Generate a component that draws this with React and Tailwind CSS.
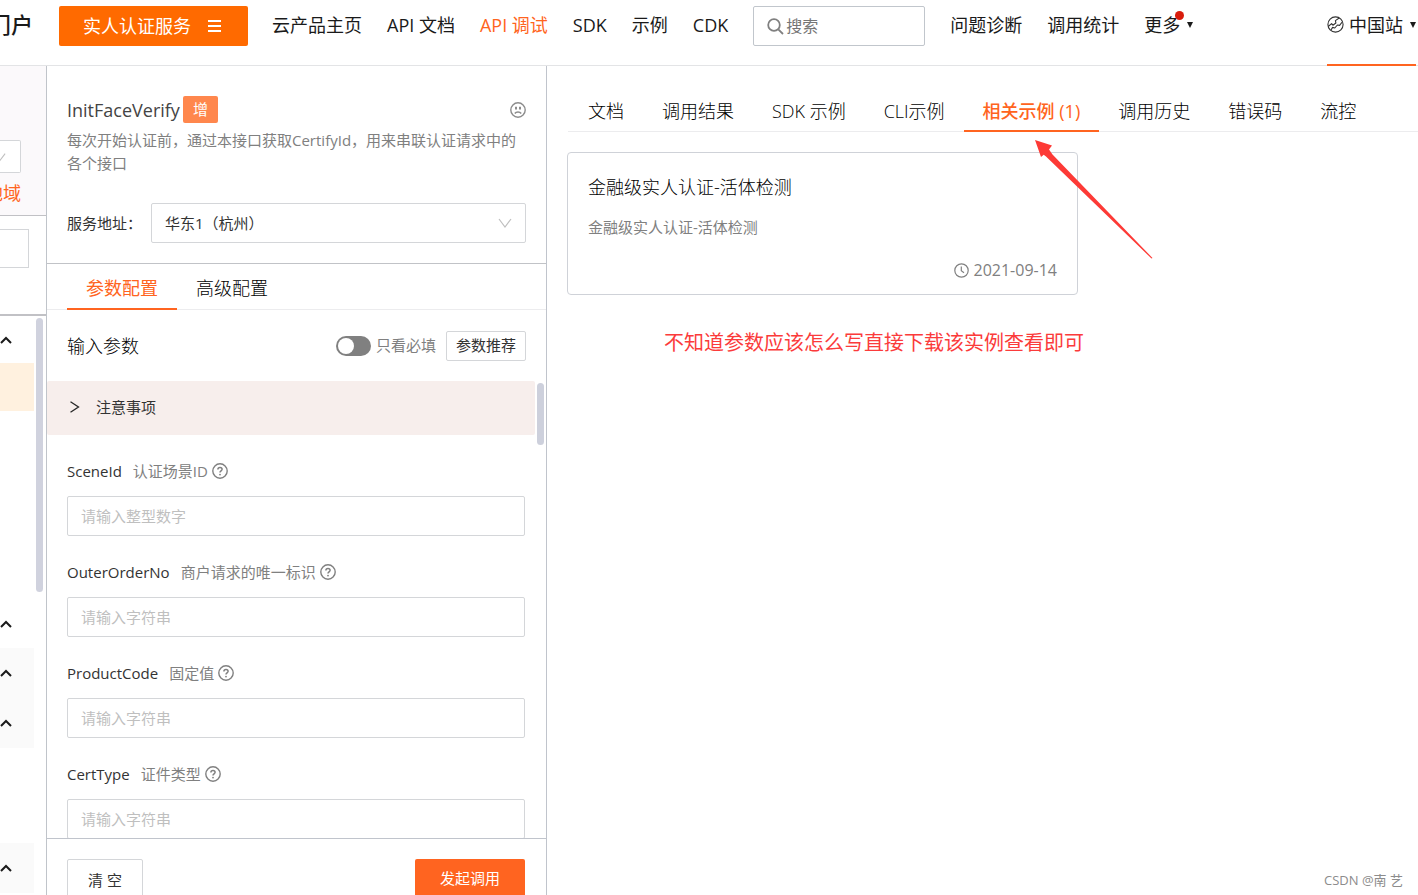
import React from "react";

const navLinks = [
  { label: "云产品主页" },
  { label: "API 文档" },
  { label: "API 调试", active: true },
  { label: "SDK" },
  { label: "示例" },
  { label: "CDK" },
];

const resultTabs = [
  { label: "文档" },
  { label: "调用结果" },
  { label: "SDK 示例" },
  { label: "CLI示例" },
  { label: "相关示例 (1)", active: true },
  { label: "调用历史" },
  { label: "错误码" },
  { label: "流控" },
];

const fields = [
  { name: "SceneId", hint: "认证场景ID", placeholder: "请输入整型数字" },
  { name: "OuterOrderNo", hint: "商户请求的唯一标识", placeholder: "请输入字符串" },
  { name: "ProductCode", hint: "固定值", placeholder: "请输入字符串" },
  { name: "CertType", hint: "证件类型", placeholder: "请输入字符串" },
];

function ChevronDown({ className }) {
  return (
    <svg viewBox="0 0 14 10" fill="none" stroke="#bfbfbf" strokeWidth="1.2" className={className} aria-hidden="true">
      <path d="M1 1l6 8 6-8" />
    </svg>
  );
}

function ChevronUp() {
  return (
    <svg width="12" height="8" viewBox="0 0 12 8" fill="none" stroke="#1a1a1a" strokeWidth="2" aria-hidden="true">
      <path d="M1 7l5-5 5 5" />
    </svg>
  );
}

function HelpIcon() {
  return (
    <svg width="16" height="16" viewBox="0 0 16 16" fill="none" stroke="#808080" aria-hidden="true">
      <circle cx="8" cy="8" r="7.2" strokeWidth="1.4" />
      <path d="M5.9 6.5C5.9 5.2 6.8 4.4 8 4.4s2.1.8 2.1 1.9c0 1.5-2.1 1.6-2.1 3.2" strokeWidth="1.5" />
      <circle cx="8" cy="11.6" r="0.9" fill="#808080" stroke="none" />
    </svg>
  );
}

function SadIcon() {
  return (
    <svg width="16" height="16" viewBox="0 0 16 16" fill="none" stroke="#8c8c8c" aria-hidden="true">
      <circle cx="8" cy="8" r="7.2" strokeWidth="1.4" />
      <path d="M6 4.8v2.8M10 4.8v2.8" strokeWidth="2" />
      <path d="M4.8 11.5c.8-1.2 1.900-1.600 3.200-1.600s2.400.4 3.200 1.600" strokeWidth="1.5" />
    </svg>
  );
}

function GlobeIcon() {
  return (
    <svg width="17" height="17" viewBox="0 0 17 17" fill="none" stroke="#333" strokeWidth="1.1" strokeLinejoin="round" aria-hidden="true">
      <circle cx="8.5" cy="8.5" r="7.6" />
      <path d="M1.200 10.500L4.600 7.600l1.300 1.600 3-2.200-.5-2.400L12.200 2" />
      <path d="M4 14l1.600-2.600 2.200.6 2.600-3 2.200.4 2.600-3.400" />
    </svg>
  );
}

function Caret() {
  return (
    <svg width="6" height="6" viewBox="0 0 6 6" fill="#1a1a1a" aria-hidden="true">
      <path d="M0 0h6L3 6z" />
    </svg>
  );
}

function Header() {
  return (
    <header className="flex h-[66px] shrink-0 items-start border-b border-[#e3e4e6] pt-1.5 text-lg text-[#1a1a1a]">
      <div className="flex h-9 w-[59px] shrink-0 items-center justify-end overflow-hidden pr-[26px] text-[22px] whitespace-nowrap">
        <span className="shrink-0 font-medium">门户</span>
      </div>
      <button type="button" className="flex h-10 w-[189px] shrink-0 items-center justify-between rounded-xs bg-[#ff6a00] pr-[27px] pl-6 text-white">
        实人认证服务
        <svg width="13" height="12" viewBox="0 0 13 12" fill="none" stroke="#fff" strokeWidth="2" aria-hidden="true">
          <path d="M0 1h13M0 6h13M0 11h13" />
        </svg>
      </button>
      <nav className="ml-6 flex h-10 items-center gap-[25px] whitespace-nowrap">
        {navLinks.map((link) => (
          <a key={link.label} href="#" className={link.active ? "pb-0.5 text-[#ff6420]" : "pb-0.5"}>
            {link.label}
          </a>
        ))}
        <label className="flex h-10 w-[172px] items-center rounded-xs border border-[#c1c6cc] pl-[13px]">
          <svg width="17" height="17" viewBox="0 0 17 17" fill="none" stroke="#808080" strokeWidth="1.8" className="shrink-0" aria-hidden="true">
            <circle cx="7" cy="7" r="5.8" />
            <path d="M11.3 11.3l4.700 4.700" />
          </svg>
          <input type="search" placeholder="搜索" aria-label="搜索" className="ml-0.5 w-full min-w-0 bg-transparent text-base outline-none placeholder:text-[#757575]" />
        </label>
        <a href="#" className="pb-0.5">问题诊断</a>
        <a href="#" className="pb-0.5">调用统计</a>
        <button type="button" className="relative flex items-center gap-[7px] pb-0.5">
          更多
          <Caret />
          <span className="absolute top-0 left-[31px] size-[9px] rounded-full bg-[#d91c0b]" />
        </button>
      </nav>
      <button type="button" className="mr-0.5 ml-auto flex h-[60px] items-start gap-[5px] border-b-2 border-[#ff6420] whitespace-nowrap">
        <span className="flex h-9 items-center"><GlobeIcon /></span>
        <span className="flex h-[38px] items-center gap-[7px]">中国站 <Caret /></span>
      </button>
    </header>
  );
}

function SideRow({ shaded }) {
  return (
    <button type="button" aria-label="展开" className={"flex h-[50px] w-[34px] shrink-0 items-center " + (shaded ? "bg-[#fafafa]" : "")}>
      <ChevronUp />
    </button>
  );
}

function Sidebar() {
  return (
    <aside className="flex w-[47px] shrink-0 flex-col overflow-hidden border-r border-[#c0c4ca]">
      <div className="flex h-[150px] shrink-0 flex-col border-b border-[#c1c1c5] bg-[#fbf9fb] pt-[74px]">
        <div className="flex h-[33px] w-[21px] items-center rounded-r-xs border-y border-r border-[#d4d6d9] bg-white">
          <ChevronDown className="-ml-1.5 h-2.5 w-3 shrink-0" />
        </div>
        <div className="mt-[7px] flex w-[21px] justify-end overflow-hidden text-lg leading-[26px] whitespace-nowrap text-[#ff6420]">
          <span className="shrink-0">地域</span>
        </div>
      </div>
      <div className="h-[100px] shrink-0 border-b-2 border-[#c1c1c5] pt-[13px]">
        <input type="text" aria-label="筛选" className="block h-[39px] w-[29px] border-y border-r border-[#d4d6d9] outline-none" />
      </div>
      <div className="flex min-h-0 flex-1 justify-between overflow-hidden pr-[3px]">
        <div className="flex flex-col">
          <div className="flex h-[47px] w-[34px] shrink-0 items-center"><ChevronUp /></div>
          <div className="mb-[189px] h-12 shrink-0 bg-[#fff1df]" />
          <div className="flex h-12 w-[34px] shrink-0 items-center"><ChevronUp /></div>
          <SideRow shaded />
          <SideRow shaded />
          <div className="h-[95px] shrink-0" />
          <SideRow shaded />
        </div>
        <div className="mt-0.5 h-[274px] w-[7px] rounded-full bg-[#d0d2de]" />
      </div>
    </aside>
  );
}

function Field({ name, hint, placeholder }) {
  return (
    <div className="pb-[23px]">
      <label htmlFor={name} className="flex h-[26px] items-center text-[15px] leading-[22px]">
        <span className="text-[#333]">{name}</span>
        <span className="mr-1 ml-[11px] text-[#808080]">{hint}</span>
        <HelpIcon />
      </label>
      <input id={name} type="text" placeholder={placeholder} className="mt-3 block h-10 w-full rounded-xs border border-[#d4d6d9] px-[13px] text-[15px] outline-none placeholder:text-[#bfbfbf]" />
    </div>
  );
}

function ParamsPanel() {
  return (
    <section className="flex w-[500px] shrink-0 flex-col border-r border-[#c0c4cc]">
      <div className="shrink-0 border-b border-[#c1c3c7] px-5 pt-[30px] pb-5">
        <div className="flex h-[27px] items-center">
          <h1 className="text-lg text-[#444]">InitFaceVerify</h1>
          <span className="ml-[3px] flex h-[27px] items-center rounded-xs bg-[#ff874d] px-2.5 text-[15px] text-white">增</span>
          <button type="button" aria-label="反馈" className="ml-auto"><SadIcon /></button>
        </div>
        <p className="mt-1.5 text-[15px] leading-[23px] text-[#808080]">
          每次开始认证前，通过本接口获取CertifyId，用来串联认证请求中的各个接口
        </p>
        <div className="mt-7 flex items-center text-[15px] text-[#333]">
          <label htmlFor="endpoint" className="w-[84px] shrink-0">服务地址：</label>
          <div className="relative flex-1">
            <select id="endpoint" className="h-10 w-full appearance-none rounded-xs border border-[#d4d6d9] bg-white px-[13px] outline-none">
              <option>华东1（杭州）</option>
            </select>
            <ChevronDown className="pointer-events-none absolute top-[15px] right-3.5 h-2.5 w-3.5" />
          </div>
        </div>
      </div>
      <div role="tablist" className="flex h-[46px] shrink-0 border-b border-[#ececee] px-5 text-lg">
        <button type="button" role="tab" aria-selected="true" className="-mb-px border-b-2 border-[#ff6420] px-[19px] pt-1 text-[#ff6420]">参数配置</button>
        <button type="button" role="tab" aria-selected="false" className="px-[19px] pt-[3px] font-light text-black">高级配置</button>
      </div>
      <div className="flex h-[71px] shrink-0 items-center px-5">
        <h2 className="text-lg font-light text-black">输入参数</h2>
        <label className="ml-auto flex items-center gap-[5px] text-[15px] text-[#808080]">
          <input type="checkbox" role="switch" className="flex h-5 w-[35px] appearance-none items-center rounded-full bg-[#808080] px-0.5 before:size-4 before:rounded-full before:bg-white" />
          只看必填
        </label>
        <button type="button" className="ml-2.5 h-[30px] w-20 rounded-xs border border-[#d4d6d9] text-[15px] text-[#333]">参数推荐</button>
      </div>
      <div className="flex min-h-0 flex-1 gap-0.5 overflow-hidden pr-0.5">
        <div className="flex-1">
          <button type="button" className="flex h-[54px] w-full items-center gap-4 rounded-xs bg-[#f7eeec] pb-0.5 pl-[22px] text-[15px] text-[#333]">
            <svg width="11" height="12" viewBox="0 0 11 12" fill="none" stroke="#262626" strokeWidth="1.3" aria-hidden="true">
              <path d="M1.5 .8L9.500 6l-8 5.200" />
            </svg>
            注意事项
          </button>
          <form className="pt-[23px] pr-2.5 pl-5">
            {fields.map((field) => (
              <Field key={field.name} {...field} />
            ))}
          </form>
        </div>
        <div className="mt-0.5 h-[62px] w-[7px] shrink-0 rounded-full bg-[#cdd0dc]" />
      </div>
      <footer className="flex h-[57px] shrink-0 items-start justify-between overflow-hidden border-t border-[#c0c4cc] pt-5 pr-[21px] pl-5 text-[15px]">
        <button type="button" className="h-[42px] w-[76px] shrink-0 rounded-xs border border-[#d4d6d9] text-[#333]">清 空</button>
        <button type="button" className="h-[38px] w-[110px] shrink-0 rounded-xs bg-[#ff6420] text-white">发起调用</button>
      </footer>
    </section>
  );
}

function ResultPanel() {
  return (
    <main className="relative flex min-w-0 flex-1 flex-col pt-6 pl-5">
      <div role="tablist" className="ml-px flex h-[42px] shrink-0 border-b border-[#ececee] pl-px text-lg font-light whitespace-nowrap text-black">
        {resultTabs.map((tab) => (
          <button
            key={tab.label}
            type="button"
            role="tab"
            aria-selected={Boolean(tab.active)}
            className={tab.active ? "-mb-px border-b-2 border-[#ff6420] px-[19px] pt-0.5 font-medium text-[#ff6420]" : "px-[19px]"}
          >
            {tab.label}
          </button>
        ))}
      </div>
      <article className="mt-5 flex h-[143px] w-[511px] flex-col rounded border border-[#cfd2d8] px-5 py-[21px]">
        <h2 className="text-lg leading-[26px] font-light text-black">金融级实人认证-活体检测</h2>
        <p className="mt-4 text-[15px] leading-[22px] text-[#808080]">金融级实人认证-活体检测</p>
        <div className="mt-[21px] flex items-center justify-end gap-[5px] text-base leading-[22px] text-[#808080]">
          <svg width="15" height="15" viewBox="0 0 15 15" fill="none" stroke="#808080" strokeWidth="1.2" aria-hidden="true">
            <circle cx="7.5" cy="7.5" r="6.7" />
            <path d="M7.3 3.500v4.300l2.700 2" />
          </svg>
          <time dateTime="2021-09-14">2021-09-14</time>
        </div>
      </article>
      <p className="mt-[34px] ml-[97px] text-xl leading-7 text-[#fb3b3b]">不知道参数应该怎么写直接下载该实例查看即可</p>
      <svg width="118" height="119" viewBox="0 0 118 119" className="pointer-events-none absolute top-[74px] left-[488px]" aria-hidden="true">
        <path d="M0 0L17 5.500L14 9.500L17.500 14.500L117.500 118L116.500 118.500L11 16.500L8.700 14.800L6 17z" fill="#fd3a36" />
      </svg>
      <p className="mt-auto mr-[15px] mb-1.5 text-right text-[13px] leading-[18px] text-[#8c8c8c]">CSDN @南 艺</p>
    </main>
  );
}

export default function App() {
  return (
    <div className="flex h-screen flex-col overflow-hidden bg-white font-['Open_Sans','Noto_Sans_CJK_SC',sans-serif] font-normal">
      <Header />
      <div className="flex min-h-0 flex-1">
        <Sidebar />
        <ParamsPanel />
        <ResultPanel />
      </div>
    </div>
  );
}
